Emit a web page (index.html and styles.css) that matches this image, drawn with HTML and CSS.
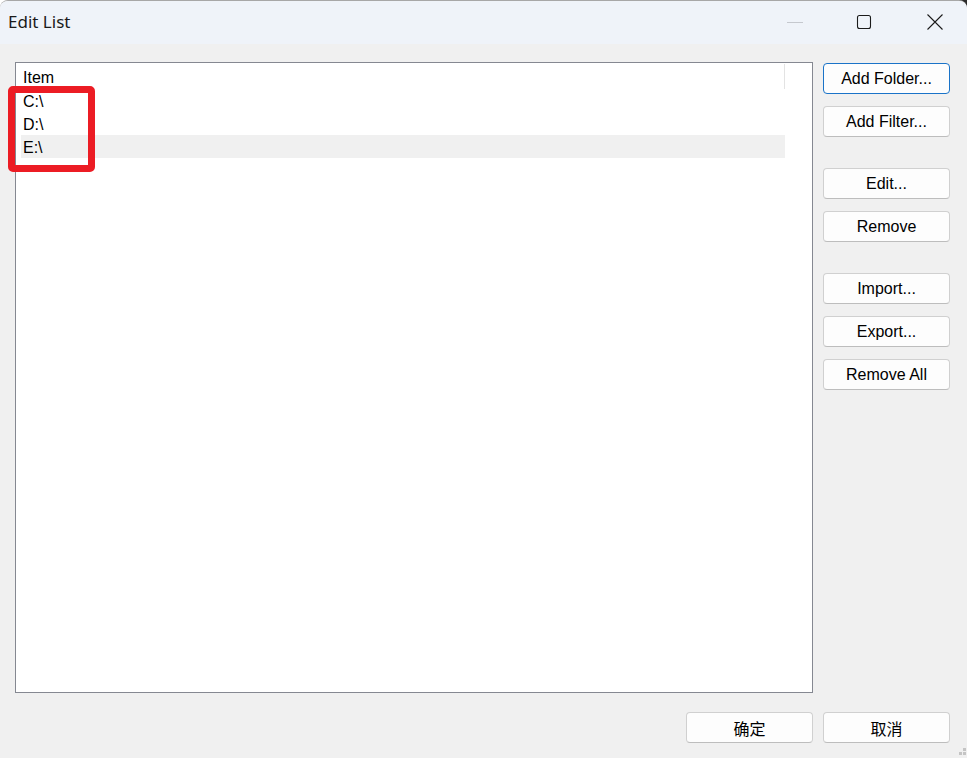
FILE: index.html
```html
<!DOCTYPE html>
<html lang="en">
<head>
    <meta charset="UTF-8">
    <meta name="viewport" content="width=device-width, initial-scale=1.0">
    <title>Edit List</title>
    <link rel="stylesheet" href="styles.css">
</head>
<body>
    <div class="window">
        <div class="titlebar">
            <div class="title">Edit List</div>
            <div class="caps">
                <svg class="cap cap-min" width="16" height="16" viewBox="0 0 16 16"><line x1="0" y1="8.5" x2="16" y2="8.5" stroke="#c5c8ce" stroke-width="1"/></svg>
                <svg class="cap cap-max" width="16" height="16" viewBox="0 0 16 16"><rect x="1.5" y="1.5" width="13" height="13" rx="2" fill="none" stroke="#1b1b1b" stroke-width="1.1"/></svg>
                <svg class="cap cap-close" width="16" height="16" viewBox="0 0 16 16"><path d="M0.5 0.5 L15.5 15.5 M15.5 0.5 L0.5 15.5" stroke="#1b1b1b" stroke-width="1.1"/></svg>
            </div>
        </div>

        <div class="main">
            <div class="listbox">
                <div class="list-header">Item</div>
                <div class="row">C:\</div>
                <div class="row">D:\</div>
                <div class="row selected">E:\</div>
            </div>

            <div class="sidebar">
                <div class="btn-group">
                    <button class="btn focused">Add Folder...</button>
                    <button class="btn">Add Filter...</button>
                </div>
                <div class="btn-group">
                    <button class="btn">Edit...</button>
                    <button class="btn">Remove</button>
                </div>
                <div class="btn-group">
                    <button class="btn">Import...</button>
                    <button class="btn">Export...</button>
                    <button class="btn">Remove All</button>
                </div>
            </div>
        </div>

        <div class="footer">
            <button class="btn cjk">确定</button>
            <button class="btn cjk">取消</button>
        </div>

        <!-- annotation drawn over the list -->
        <div class="marker"></div>

        <div class="grip">
            <span class="dot d1"></span>
            <span class="dot d2"></span>
            <span class="dot d3"></span>
        </div>
    </div>
</body>
</html>
```

FILE: styles.css
```css
html, body {
    margin: 0;
    padding: 0;
}
body {
    width: 967px;
    height: 758px;
    overflow: hidden;
    background: linear-gradient(to right, #ffffff 585px, #2b2b2b 585px) no-repeat;
    background-size: 100% 12px;
    background-color: #f0f0f0;
    font-family: "Liberation Sans", Arial, sans-serif;
    font-size: 16px;
    color: #000;
}
.window {
    position: relative;
    height: 757px;
    border-top: 1px solid rgba(0, 0, 0, 0.3);
    border-radius: 8px 8px 0 0;
    background-color: #f0f0f0;
    overflow: hidden;
}
.titlebar {
    display: flex;
    align-items: center;
    height: 43px;
    background-color: #eff3f9;
}
.title {
    flex: 1;
    padding-left: 8px;
    padding-bottom: 2px;
    font-family: "Noto Sans", "Open Sans", sans-serif;
    font-size: 17px;
    color: #1a1a1a;
}
.caps {
    display: flex;
    align-items: center;
    padding-right: 24px;
    padding-bottom: 1px;
}
.cap {
    display: block;
}
.cap-max {
    margin-left: 53px;
}
.cap-close {
    margin-left: 55px;
}
.main {
    display: flex;
    gap: 10px;
    padding: 18px 17px 0 15px;
}
.listbox {
    width: 798px;
    height: 631px;
    box-sizing: border-box;
    border: 1px solid #858891;
    background-color: #fff;
}
.list-header {
    width: 769px;
    height: 25px;
    box-sizing: border-box;
    padding: 2px 0 0 7px;
    margin-top: 1px;
    line-height: 23px;
    border-right: 1px solid #e3e3e3;
}
.row {
    width: 764px;
    height: 23px;
    box-sizing: border-box;
    margin-left: 5px;
    padding: 2px 0 0 2px;
    line-height: 21px;
}
.row.selected {
    background-color: #f0f0f0;
}
.sidebar {
    display: flex;
    flex-direction: column;
    gap: 31px;
    width: 127px;
    padding-top: 1px;
}
.btn-group {
    display: flex;
    flex-direction: column;
    gap: 12px;
}
.btn {
    width: 127px;
    height: 31px;
    box-sizing: border-box;
    padding: 1px 0 0;
    border: 1px solid #d0d0d0;
    border-bottom-color: #bdbdbd;
    border-radius: 4px;
    background-color: #fdfdfd;
    font-family: "Liberation Sans", Arial, sans-serif;
    font-size: 16px;
    line-height: 28px;
    color: #000;
    text-align: center;
}
.btn.focused {
    border-color: #1a73c8;
}
.btn.cjk {
    font-family: "Noto Sans CJK SC", "Liberation Sans", sans-serif;
    font-size: 16px;
}
.footer {
    display: flex;
    justify-content: flex-end;
    gap: 10px;
    padding: 19px 17px 0 0;
}
.marker {
    position: absolute;
    left: 8px;
    top: 85px;
    width: 87px;
    height: 86px;
    box-sizing: border-box;
    border: 7px solid #ec1c24;
    border-radius: 5px;
}
.grip {
    position: absolute;
    right: 0;
    bottom: 0;
    width: 10px;
    height: 10px;
}
.dot {
    position: absolute;
    width: 3px;
    height: 3px;
    background-color: #c4c4c4;
}
.d1 { left: 6px; top: 0; }
.d2 { left: 2px; top: 4px; }
.d3 { left: 6px; top: 4px; }
```
